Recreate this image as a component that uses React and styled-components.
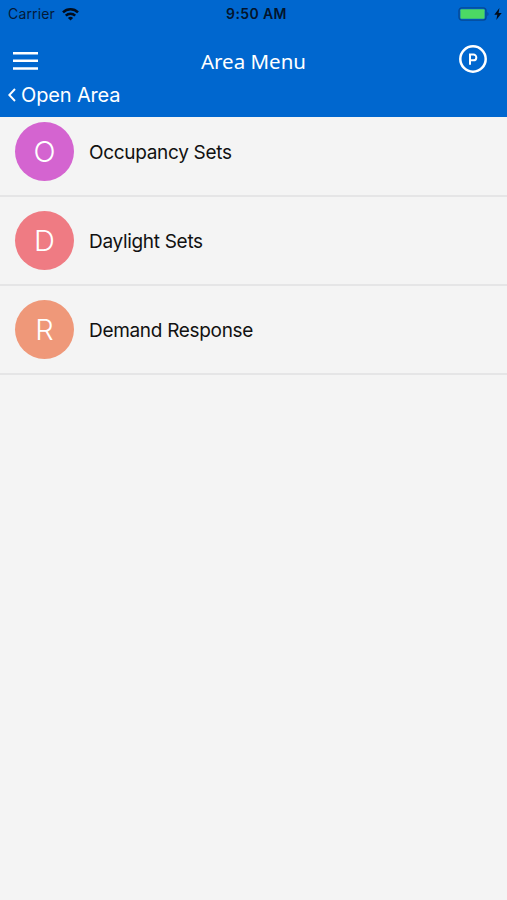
import styled, { createGlobalStyle } from 'styled-components';

const GlobalStyle = createGlobalStyle`
    * {
        box-sizing: border-box;
    }

    body {
        margin: 0;
        background-color: #f4f4f4;
        font-family: Inter, "Liberation Sans", sans-serif;
    }
`;

const Screen = styled.div`
    min-height: 100vh;
    overflow: hidden;
    background-color: #f4f4f4;
`;

const Header = styled.header`
    position: relative;
    z-index: 1;
    height: 117px;
    background-color: #0067cf;
    color: #fff;
`;

const StatusBar = styled.div`
    display: grid;
    grid-template-columns: 1fr auto 1fr;
    align-items: center;
    height: 28px;
    padding: 0 5px 0 8px;
    color: #041a38;
    font-size: 14px;
    line-height: 16px;
`;

const StatusSide = styled.div`
    display: flex;
    align-items: center;
    justify-content: ${({ $end }) => ($end ? 'flex-end' : 'flex-start')};
    gap: ${({ $end }) => ($end ? '5px' : '7px')};
    letter-spacing: 0.15px;

    svg {
        display: block;
    }
`;

const Carrier = styled.span`
    padding-bottom: 1px;
`;

const Clock = styled.span`
    padding: 0 0 1px 3px;
    color: #03142c;
    font-weight: 600;
    letter-spacing: 0.4px;
`;

const NavBar = styled.div`
    display: grid;
    grid-template-columns: 1fr auto 1fr;
    align-items: center;
    height: 66px;
    padding: 0 20px 0 13px;
`;

const IconButton = styled.button`
    justify-self: ${({ $end }) => ($end ? 'end' : 'start')};
    padding: 0;
    margin-bottom: ${({ $end }) => ($end ? '5px' : '0')};
    border: 0;
    background: none;
    color: inherit;

    svg {
        display: block;
    }
`;

const Title = styled.h1`
    margin: 0;
    padding-left: 7px;
    font-family: "Noto Sans", "Open Sans", sans-serif;
    font-size: 20.5px;
    font-weight: 400;
    line-height: 28px;
`;

const BackLink = styled.a`
    display: flex;
    align-items: center;
    gap: 5px;
    height: 24px;
    margin-top: -11px;
    padding-left: 8px;
    font-size: 20px;
    letter-spacing: -0.15px;
`;

// the first row is scrolled slightly under the header
const List = styled.ul`
    margin: -9px 0 0;
    padding: 0;
    list-style: none;
`;

const Row = styled.li`
    display: flex;
    align-items: center;
    gap: 15px;
    height: 89px;
    padding-left: 15px;
    border-bottom: 2px solid #e5e5e6;
`;

const Avatar = styled.span`
    display: flex;
    align-items: center;
    justify-content: center;
    width: 59px;
    height: 59px;
    border-radius: 50%;
    background-color: ${({ $color }) => $color};
    color: #fff;
    font-size: 29px;
    font-weight: 300;
`;

const Label = styled.span`
    padding-top: 1px;
    color: #111;
    font-size: 19px;
    letter-spacing: -0.31px;
`;

const items = [
    { letter: 'O', name: 'Occupancy Sets', color: '#d464d0' },
    { letter: 'D', name: 'Daylight Sets', color: '#ef7b83' },
    { letter: 'R', name: 'Demand Response', color: '#ef9879' },
];

const WifiIcon = () => (
    <svg width="17" height="13" viewBox="0 0 17 13" fill="none" stroke="#020d1d" strokeWidth="2.5">
        <path d="M1 4.4a10.7 10.7 0 0 1 15 0" />
        <path d="M3.8 7.7a6.7 6.7 0 0 1 9.4 0" />
        <path d="M8.5 12.6 5.9 10a3.7 3.7 0 0 1 5.2 0z" fill="#020d1d" stroke="none" />
    </svg>
);

const BatteryIcon = () => (
    <svg width="32" height="14" viewBox="0 0 32 14">
        <rect x="2" y="0.9" width="27" height="12.2" rx="2.8" fill="none" stroke="#064995" strokeWidth="1.4" />
        <rect x="3.4" y="2.3" width="24.2" height="9.4" rx="1" fill="#4cd964" />
        <path d="M30.4 5v4c1.5-.5 1.5-3.5 0-4z" fill="#064995" />
    </svg>
);

const BoltIcon = () => (
    <svg width="8" height="12" viewBox="0 0 8 12" fill="#020d1d">
        <path d="M5.4 0 .3 6.8h3L2.3 12 7.7 4.9H4.6z" />
    </svg>
);

const MenuIcon = () => (
    <svg width="25" height="18" viewBox="0 0 25 18" fill="currentColor">
        <path d="M0 0h25v2.5H0zM0 7.6h25v2.5H0zM0 15.2h25v2.5H0z" />
    </svg>
);

const ParkingIcon = () => (
    <svg width="28" height="28" viewBox="0 0 28 28" fill="none" stroke="currentColor">
        <circle cx="14" cy="14" r="12.7" strokeWidth="2.5" />
        <path d="M11 19.7V9.5h3.4a2.9 2.9 0 0 1 0 5.8H11" strokeWidth="2" />
    </svg>
);

const BackIcon = () => (
    <svg width="8" height="14" viewBox="0 0 8 14" fill="none" stroke="currentColor" strokeWidth="1.9">
        <path d="M7 1 1.3 7 7 13" />
    </svg>
);

const App = () => {
    return (
        <Screen>
            <GlobalStyle />
            <Header>
                <StatusBar>
                    <StatusSide>
                        <Carrier>Carrier</Carrier>
                        <WifiIcon />
                    </StatusSide>
                    <Clock>9:50 AM</Clock>
                    <StatusSide $end>
                        <BatteryIcon />
                        <BoltIcon />
                    </StatusSide>
                </StatusBar>
                <NavBar>
                    <IconButton aria-label="Menu">
                        <MenuIcon />
                    </IconButton>
                    <Title>Area Menu</Title>
                    <IconButton $end aria-label="Profile">
                        <ParkingIcon />
                    </IconButton>
                </NavBar>
                <BackLink>
                    <BackIcon />
                    <span>Open Area</span>
                </BackLink>
            </Header>
            <List>
                {items.map((item) => (
                    <Row key={item.name}>
                        <Avatar $color={item.color}>{item.letter}</Avatar>
                        <Label>{item.name}</Label>
                    </Row>
                ))}
            </List>
        </Screen>
    );
};

export default App;
